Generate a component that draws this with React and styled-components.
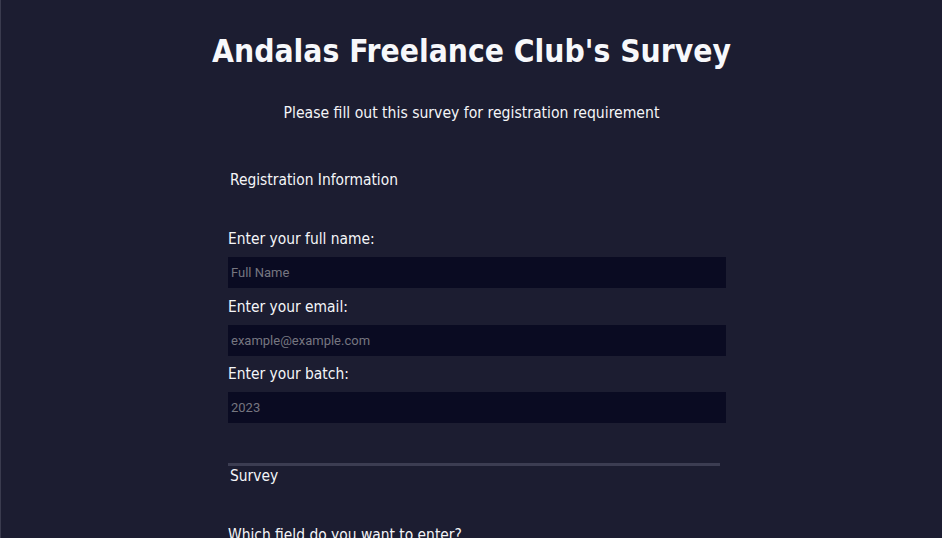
import React from "react";
import styled, { createGlobalStyle } from "styled-components";

const GlobalStyle = createGlobalStyle`
  html, body {
    margin: 0;
    padding: 0;
    background-color: #1c1d31;
    color: #f4f5f8;
    font-family: "DejaVu Sans Condensed", "DejaVu Sans", sans-serif;
    overflow: hidden;
  }
`;

const Page = styled.div`
  height: 538px;
  border-left: 1px solid #3a3b4e;
  box-sizing: border-box;
  display: flex;
  flex-direction: column;
  align-items: center;
`;

const Title = styled.h1`
  margin: 30px 0 0;
  font-size: 31.5px;
  font-weight: bold;
  line-height: 42px;
  color: #f7f8fb;
`;

const Subtitle = styled.p`
  margin: 31px 0 0;
  font-size: 15.6px;
  line-height: 20px;
`;

const Form = styled.form`
  width: 498px;
  margin: 47px 0 0 11px;
  display: flex;
  flex-direction: column;
`;

const Section = styled.fieldset`
  border: none;
  margin: 0;
  padding: 0;
  display: flex;
  flex-direction: column;
`;

const Legend = styled.div`
  padding-left: 2px;
  font-size: 15.4px;
  line-height: 20px;
  margin-bottom: 39px;
`;

const Label = styled.label`
  font-size: 15.4px;
  line-height: 20px;
  margin-bottom: 8px;
`;

const Input = styled.input`
  box-sizing: border-box;
  width: 498px;
  height: 31px;
  border: none;
  outline: none;
  background-color: #0a0b22;
  color: #ddd;
  padding: 0 3px;
  font-family: Roboto, "Liberation Sans", sans-serif;
  font-size: 13px;
  margin-bottom: 8.5px;

  &::placeholder {
    color: #767680;
  }
`;

const Divider = styled.hr`
  width: 492px;
  height: 3px;
  border: none;
  background-color: #3c3d52;
  margin: 31px 0 0;
`;

const fields = [
  { id: "name", label: "Enter your full name:", placeholder: "Full Name", type: "text" },
  { id: "email", label: "Enter your email:", placeholder: "example@example.com", type: "email" },
  { id: "batch", label: "Enter your batch:", placeholder: "2023", type: "number" },
];

export default function App() {
  return (
    <>
      <GlobalStyle />
      <Page>
        <Title>Andalas Freelance Club's Survey</Title>
        <Subtitle>Please fill out this survey for registration requirement</Subtitle>
        <Form>
          <Section>
            <Legend>Registration Information</Legend>
            {fields.map((f) => (
              <React.Fragment key={f.id}>
                <Label htmlFor={f.id}>{f.label}</Label>
                <Input id={f.id} type={f.type} placeholder={f.placeholder} />
              </React.Fragment>
            ))}
          </Section>
          <Divider />
          <Section>
            <Legend>Survey</Legend>
            <Label>Which field do you want to enter?</Label>
          </Section>
        </Form>
      </Page>
    </>
  );
}
